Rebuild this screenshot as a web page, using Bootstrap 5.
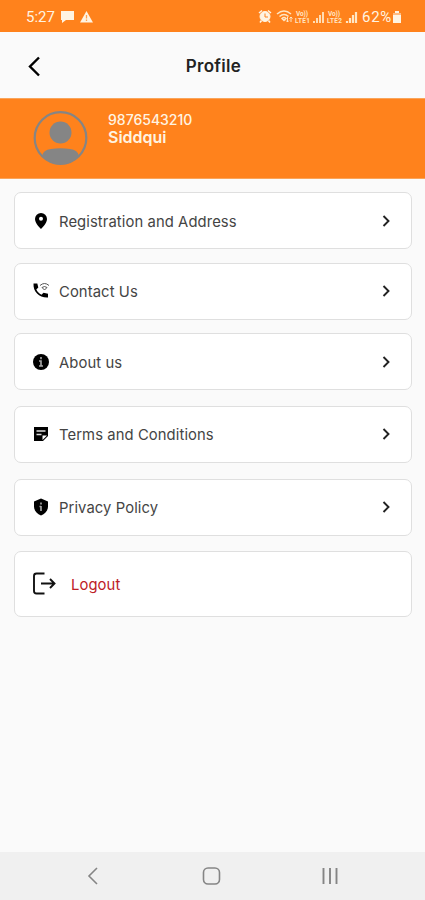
<!DOCTYPE html>
<html lang="en">
<head>
<meta charset="utf-8">
<meta name="viewport" content="width=device-width, initial-scale=1">
<title>Profile</title>
<link href="https://cdn.jsdelivr.net/npm/bootstrap@5.3.0/dist/css/bootstrap.min.css" rel="stylesheet">
<style>
body{font-family:Inter,Roboto,sans-serif;background:#fafafa;color:#444}
svg{display:block;flex:none}
.screen{height:900px}
.orange{background:#ff821c;color:#fff4e2}
.status{height:32px;padding:1px 23px 0 26px;font:400 15px/32px Roboto,sans-serif}
.percent{margin-left:3px;letter-spacing:.7px}
.volte{font:700 6.5px Roboto,sans-serif;fill:#ffe6c4;stroke:none}
.topbar{height:66px;padding:2px 25px 0 26px}
.topbar h1{font-size:17px;font-weight:600;color:#222;letter-spacing:.3px}
.profile{height:81px;padding:12px 0 0 33px;border-top:1px solid #f9a45a;border-bottom:1px solid #f9a45a}
.phone{font-size:14px;line-height:18px;font-weight:500}
.person{font-size:16px;line-height:17px;font-weight:600}
.menu{padding:13.300px 13px 0 14px}
.menu-row{height:57px;border:1px solid #dfdfdf;border-radius:7px;background:#fff;padding:0 17px 0 18px;margin-bottom:13.500px;color:#444;font-size:14.800px;letter-spacing:.09px;text-decoration:none}
.menu-row.roomy{margin-bottom:15.700px}
.menu-row.logout{height:66px;color:#bd2026}
.menu-row.logout span{margin-left:13px;padding-top:2px}
.label{padding-top:2px;margin-left:9px}
.glyph{margin-left:-1px}
.navkeys{height:48px;background:#f0f0f0;padding-right:3px}
</style>
</head>
<body>
<div class="screen d-flex flex-column">
<div class="status orange d-flex align-items-center justify-content-between">
  <div class="d-flex align-items-center">
    <span>5:27</span>
    <svg class="ms-1" width="42" height="16" viewBox="0 0 42 16" fill="#fff4e2"><path d="M2 2h13v9H7l-4 3v-3H2z"/><path d="M27.500 2 34 13.500H21z"/><path d="M27.500 6v3.500M27.500 10.500v1.500" stroke="#ffa050" stroke-width="1.300"/></svg>
  </div>
  <div class="d-flex align-items-center">
    <svg width="102" height="18" viewBox="0 0 102 18" fill="none" stroke="#ffe6c4">
      <g stroke="#fff4e2"><circle cx="8" cy="8.500" r="5" fill="#fff4e2"/><path d="M2 5 5 2.500M11 2.500 14 5M4.500 12.500 3 14.500M11.500 12.500l1.500 2" stroke-width="1.500"/><path d="M8 5.500V9h3" stroke="#ff821c"/></g>
      <path d="M20 6q7-6 14 0M22.500 8.500q4.500-4 9 0M25 10.500q2-2 4 0l-2 2z" stroke-width="1.500"/><path d="M30.500 9v5M29 12.500l1.500 1.500 1.500-1.500M34 14V9M32.500 10.500 34 9l1.500 1.500"/>
      <text class="volte" x="39" y="7.500" textLength="12">Vo))</text><text class="volte" x="38" y="15" textLength="15">LTE1</text>
      <path d="M57 15v-2M60 15v-5M63 15V7M66 15V4" stroke-width="1.800"/>
      <text class="volte" x="71" y="7.500" textLength="12">Vo))</text><text class="volte" x="70" y="15" textLength="15">LTE2</text>
      <path d="M90 15v-2M93 15v-5M96 15V7M99 15V4" stroke-width="2.200"/>
    </svg>
    <span class="percent">62%</span>
    <svg width="10" height="14" viewBox="0 0 10 14" fill="#fff4e2"><path d="M3 1h4v2H3zM1 5h8v8H1z"/><path d="M1 3h8v2H1z" opacity=".5"/></svg>
  </div>
</div>
<header class="topbar d-flex align-items-center justify-content-between">
  <svg width="17" height="22" viewBox="0 0 17 22" fill="none" stroke="#000" stroke-width="2.400"><path d="M13 2.500 4 11.500l9 9"/></svg>
  <h1 class="m-0">Profile</h1>
  <span class="px-2"></span>
</header>
<section class="profile orange d-flex">
  <svg width="55" height="55" viewBox="0 0 55 55" fill="#858585"><circle cx="27.500" cy="27" r="25.800" fill="none" stroke="#858585" stroke-width="2.200"/><circle cx="27.500" cy="21.500" r="11"/><path d="M9 45Q10 39 18 38q9.500-1.500 19 0 8 1 9 7-7 8.500-18.500 8.500T9 45z"/></svg>
  <div class="ms-3 ps-1">
    <div class="phone">9876543210</div>
    <div class="person">Siddqui</div>
  </div>
</section>
<main class="menu flex-grow-1">
  <a class="menu-row d-flex align-items-center">
    <svg class="glyph" width="18" height="18" viewBox="0 0 18 18"><path fill-rule="evenodd" d="M9 1a6 6 0 0 0-6 6c0 4.500 6 10 6 10S15 11.500 15 7a6 6 0 0 0-6-6zm0 3.700a2 2 0 1 1 0 4 2 2 0 0 1 0-4z"/></svg>
    <span class="label flex-grow-1">Registration and Address</span>
    <svg width="16" height="16" viewBox="0 0 16 16"><path id="chev" d="m5.500 3 5 5-5 5" fill="none" stroke="#222" stroke-width="1.900"/></svg>
  </a>
  <a class="menu-row d-flex align-items-center">
    <svg class="glyph" width="18" height="18" viewBox="0 0 18 18"><path d="M1.500 1.500h3.800l1 4-2 2c1.300 2.400 2.700 3.800 5.200 5.200l2-2 4.500 1V15.500C7.500 16 1 10 1.500 1.500z"/><path d="M8 3.500q4.500-4 9 0M10 5.500q2.500-2 5 0l-2.500 2.500z" fill="none" stroke="#555"/></svg>
    <span class="label flex-grow-1">Contact Us</span>
    <svg width="16" height="16" viewBox="0 0 16 16"><use href="#chev"/></svg>
  </a>
  <a class="menu-row roomy d-flex align-items-center">
    <svg class="glyph" width="18" height="18" viewBox="0 0 18 18"><circle cx="9" cy="9" r="8"/><path d="M9 4v2.200M7 8h2v5M7 13h4" stroke="#aaa" stroke-width="1.600" fill="none"/></svg>
    <span class="label flex-grow-1">About us</span>
    <svg width="16" height="16" viewBox="0 0 16 16"><use href="#chev"/></svg>
  </a>
  <a class="menu-row roomy d-flex align-items-center">
    <svg class="glyph" width="18" height="18" viewBox="0 0 18 18"><path d="M2 2h14v9l-5 5H2z"/><path d="M4.500 6h9M4.500 9.500h5" stroke="#ddd" stroke-width="1.400"/><path d="M10.500 15v-4.500H15z" fill="#fff"/></svg>
    <span class="label flex-grow-1">Terms and Conditions</span>
    <svg width="16" height="16" viewBox="0 0 16 16"><use href="#chev"/></svg>
  </a>
  <a class="menu-row roomy d-flex align-items-center">
    <svg class="glyph" width="18" height="18" viewBox="0 0 18 18"><path d="m9 .5 7 3v5c0 4-3 7.500-7 9-4-1.500-7-5-7-9v-5z"/><path d="M9 4.500v2M9 8v5M7.500 8.500H9" stroke="#aaa" stroke-width="1.600"/></svg>
    <span class="label flex-grow-1">Privacy Policy</span>
    <svg width="16" height="16" viewBox="0 0 16 16"><use href="#chev"/></svg>
  </a>
  <a class="menu-row logout d-flex align-items-center">
    <svg class="glyph" width="26" height="24" viewBox="0 0 26 24" fill="none" stroke="#111" stroke-width="1.900"><path d="M12.500 1.500H4.500Q2 1.500 2 4v15q0 2.500 2.500 2.500h8M9 11.500h13.500M18 7l4.500 4.500L18 16"/></svg>
    <span>Logout</span>
  </a>
</main>
<nav class="navkeys d-flex justify-content-center align-items-center">
  <svg width="262" height="24" viewBox="0 0 262 24" fill="none" stroke="#858585" stroke-width="1.600"><path d="m17 4-8 8 8 8"/><rect x="123.500" y="4" width="16" height="16" rx="4.500"/><path d="M243.500 4v16M250 4v16M256.500 4v16" stroke-width="1.900"/></svg>
</nav>
</div>
<script src="https://cdn.jsdelivr.net/npm/bootstrap@5.3.0/dist/js/bootstrap.bundle.min.js"></script>
</body>
</html>
